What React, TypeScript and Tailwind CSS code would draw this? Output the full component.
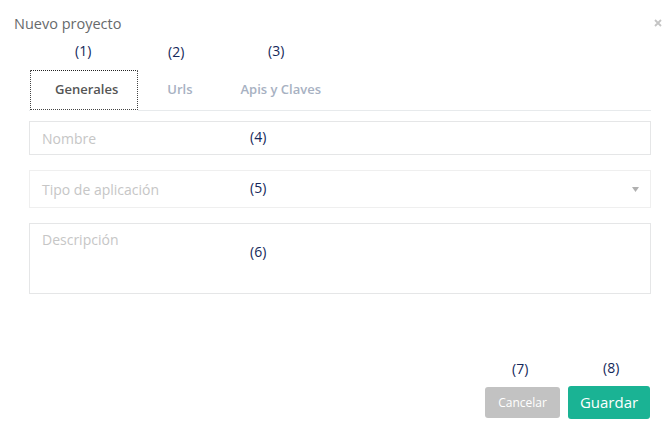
import React from "react";

const Num = ({ n, x, y }: { n: number; x: number; y: number }) => (
  <span
    className="absolute text-[14px] leading-[20px] text-[#14285a] whitespace-nowrap"
    style={{ left: x, top: y }}
  >
    ({n})
  </span>
);

export default function App() {
  return (
    <div
      className="relative w-[671px] h-[434px] bg-white overflow-hidden"
      style={{ fontFamily: '"Open Sans", "Liberation Sans", sans-serif' }}
    >
      <div className="flex items-start justify-between pt-[14px] pl-[14px] pr-[9px]">
        <div className="text-[14.5px] leading-[20px] text-[#676a6c]">Nuevo proyecto</div>
        <button className="mt-[5px] w-[8px] h-[8px]">
          <svg width="8" height="8" viewBox="0 0 8 8">
            <path d="M1 1 L7 7 M7 1 L1 7" stroke="#c4c4c4" strokeWidth="1.8" />
          </svg>
        </button>
      </div>

      <div className="ml-[29px] w-[622px] mt-[36px]">
        <ul className="flex border-b border-[#e7eaec] pl-px">
          <li className="-mb-px border-b border-white">
            <div className="h-[40px] border-t border-t-[#222] border-x border-b border-dotted border-x-[#444] border-b-[#444] pl-[24px] pr-[19px] flex items-center text-[13px] font-semibold text-[#555]">
              Generales
            </div>
          </li>
          <li className="ml-[4px]">
            <div className="h-[40px] pl-[25px] pr-[20px] flex items-center text-[13px] font-semibold text-[#a7b1c2]">Urls</div>
          </li>
          <li className="ml-[3px]">
            <div className="h-[40px] pl-[25px] pr-[20px] flex items-center text-[13px] font-semibold text-[#a7b1c2]">Apis y Claves</div>
          </li>
        </ul>

        <div className="mt-[10px] h-[34px] border border-[#e5e6e7] px-[12px] flex items-center text-[14px] text-[#c6c6c6]">
          Nombre
        </div>
        <div className="mt-[15px] h-[38px] border border-[#efefef] pl-[12px] pr-[11px] flex items-center justify-between text-[14px] text-[#c6c6c6]">
          <span>Tipo de aplicación</span>
          <svg width="7" height="5" viewBox="0 0 7 5">
            <path d="M0 0 L7 0 L3.5 5 Z" fill="#b0b0b0" />
          </svg>
        </div>
        <div className="mt-[15px] h-[71px] border border-[#e5e6e7] px-[12px] pt-[6px] text-[14px] leading-[20px] text-[#c6c6c6]">
          Descripción
        </div>
      </div>

      <div className="mt-[92px] pr-[21px] flex justify-end items-center gap-[8px]">
        <button className="w-[75px] h-[31px] rounded-[3px] bg-[#c2c2c2] text-white text-[12px]">Cancelar</button>
        <button className="w-[82px] h-[33px] rounded-[3px] bg-[#1ab394] text-white text-[15px]">Guardar</button>
      </div>

      <Num n={1} x={75} y={41} />
      <Num n={2} x={168} y={42} />
      <Num n={3} x={268} y={41} />
      <Num n={4} x={250} y={127} />
      <Num n={5} x={250} y={178} />
      <Num n={6} x={250} y={242} />
      <Num n={7} x={512} y={359} />
      <Num n={8} x={603} y={358} />
    </div>
  );
}
